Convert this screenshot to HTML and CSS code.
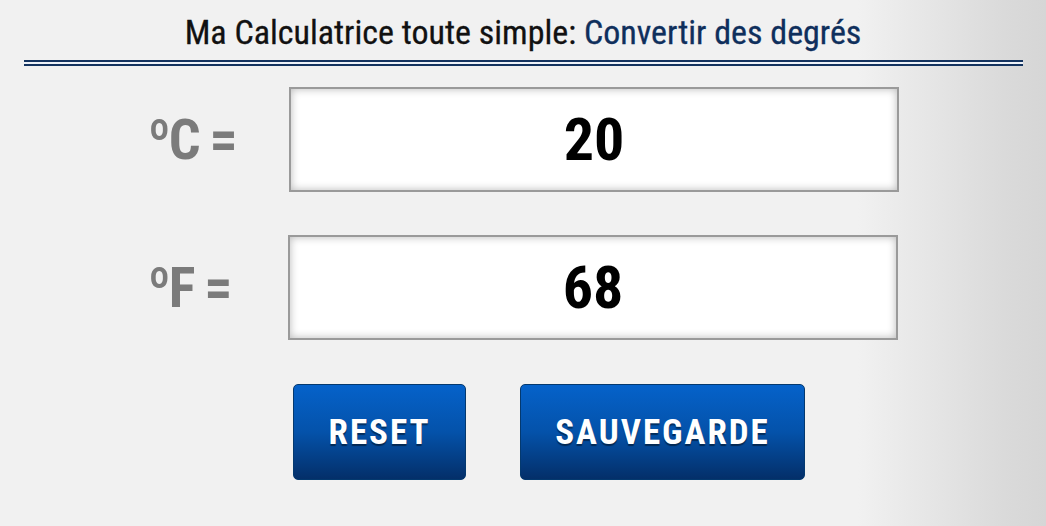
FILE: index.html
```html
<!DOCTYPE html>
<html lang="fr"><head><meta charset="utf-8"><title>Ma Calculatrice toute simple</title><link rel="stylesheet" href="styles.css"></head>
<body>
<div class="page">
  <h1 class="title">Ma Calculatrice toute simple: <span class="title-accent">Convertir des degrés</span></h1>
  <div class="rule"></div>
  <div class="row">
    <label class="unit" for="c">ºC =</label>
    <input class="field" id="c" type="text" value="20">
  </div>
  <div class="row">
    <label class="unit" for="f">ºF =</label>
    <input class="field field-f" id="f" type="text" value="68">
  </div>
  <div class="actions">
    <button class="btn btn-reset" type="button">RESET</button>
    <button class="btn btn-save" type="button">SAUVEGARDE</button>
  </div>
</div>
</body></html>
```
FILE: styles.css
```css
html, body { margin: 0; padding: 0; }
body {
  width: 1046px;
  height: 526px;
  overflow: hidden;
  font-family: "Roboto Condensed", "Open Sans", sans-serif;
  font-stretch: condensed;
  background: linear-gradient(to right, #f1f1f1 0%, #f1f1f1 82%, #e4e4e4 90%, #dadada 96%, #d6d6d6 100%);
}
.page { display: flex; flex-direction: column; }
.title {
  margin: 0;
  padding-top: 12px;
  line-height: 40px;
  font-size: 34px;
  font-weight: 400;
  text-align: center;
  color: #111;
  -webkit-text-stroke: 0.3px currentColor;
}
.title-accent { color: #0f2f5c; }
.rule {
  margin: 8px 23px 0 24px;
  height: 2px;
  border-top: 2px solid #14335f;
  border-bottom: 2px solid #14335f;
  background: #eef2f8;
}
.row {
  display: flex;
  align-items: center;
  padding-left: 148px;
  margin-top: 21px;
}
.row + .row { margin-top: 43px; }
.unit {
  width: 141px;
  font-size: 56px;
  font-weight: 700;
  letter-spacing: -2px;
  color: #7b7b7b;
  line-height: 1;
}
.field {
  box-sizing: border-box;
  width: 610px;
  height: 105px;
  margin: 0;
  padding: 0;
  border: 2px solid #9a9a9a;
  background: #fff;
  box-shadow: inset 0 0 9px rgba(0,0,0,0.28);
  font-family: "Roboto Condensed", sans-serif;
  font-stretch: condensed;
  font-size: 60px;
  font-weight: 700;
  color: #000;
  text-align: center;
  outline: none;
}
.field-f { margin-left: -1px; }
.actions {
  display: flex;
  gap: 54px;
  padding-left: 293px;
  margin-top: 44px;
}
.btn {
  height: 96px;
  border: 1px solid #04396f;
  border-radius: 5px;
  background: linear-gradient(to bottom, #0562ca 0%, #0452aa 50%, #042f69 100%);
  color: #fff;
  font-family: "Roboto Condensed", sans-serif;
  font-stretch: condensed;
  font-size: 35px;
  font-weight: 700;
  letter-spacing: 2px;
  text-shadow: 0 2px 1px rgba(0,0,0,0.45);
  padding: 0;
  cursor: pointer;
}
.btn-reset { width: 173px; }
.btn-save { width: 285px; }
```
